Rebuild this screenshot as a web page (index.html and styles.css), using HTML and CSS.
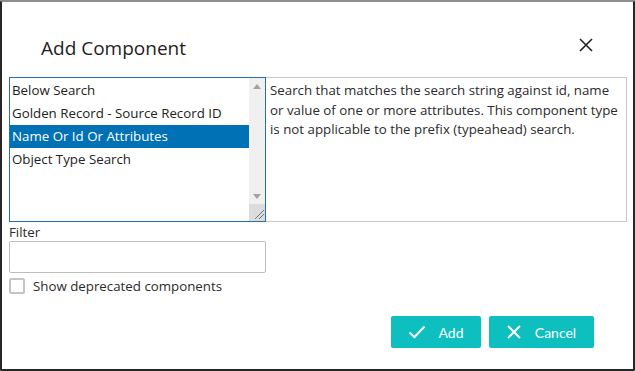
FILE: index.html
```html
<!DOCTYPE html>
<html lang="en">

<head>
    <meta charset="UTF-8" />
    <meta name="viewport" content="width=device-width, initial-scale=1.0" />
    <title>Add Component</title>
    <link rel="stylesheet" href="styles.css">
</head>

<body>
    <div class="dialog">
        <div class="header">
            <h1 class="title">Add Component</h1>
            <button class="closeBtn" aria-label="Close">
                <svg width="14" height="14" viewBox="0 0 14 14">
                    <path d="M1 1 L13 13 M13 1 L1 13" stroke="#222" stroke-width="1.6" fill="none" />
                </svg>
            </button>
        </div>
        <div class="body">
            <div class="pickRow">
                <div class="listbox">
                    <ul class="items">
                        <li>Below Search</li>
                        <li>Golden Record - Source Record ID</li>
                        <li class="selected">Name Or Id Or Attributes</li>
                        <li>Object Type Search</li>
                    </ul>
                    <div class="scrollbar">
                        <span class="arrow up"></span>
                        <span class="track"></span>
                        <span class="arrow down"></span>
                        <span class="grip">
                            <svg width="17" height="17" viewBox="0 0 17 17">
                                <path d="M15 6 L6 15 M15 10 L10 15" stroke="#777" stroke-width="1" fill="none" />
                            </svg>
                        </span>
                    </div>
                </div>
                <div class="description">
                    Search that matches the search string against id, name or value of one or more attributes. This component type is not applicable to the prefix (typeahead) search.
                </div>
            </div>
            <label class="filterLabel" for="filter">Filter</label>
            <input class="filter" id="filter" type="text" />
            <label class="deprecated">
                <span class="checkbox"></span>
                Show deprecated components
            </label>
        </div>
        <div class="footer">
            <button class="actionBtn addBtn">
                <svg width="18" height="14" viewBox="0 0 18 14">
                    <path d="M1.5 7.5 L6.5 12 L16.5 1.5" stroke="#fff" stroke-width="2" fill="none" />
                </svg>
                Add
            </button>
            <button class="actionBtn cancelBtn">
                <svg width="14" height="14" viewBox="0 0 14 14">
                    <path d="M1 1 L13 13 M13 1 L1 13" stroke="#fff" stroke-width="2" fill="none" />
                </svg>
                Cancel
            </button>
        </div>
    </div>
</body>

</html>
```

FILE: styles.css
```css
:root {
    --text: #222;
    --muted-border: #c8c8c8;
    --select-blue: #0071b5;
    --focus-blue: #2270ad;
    --teal: #0dbfbf;
    --base-font: 'Open Sans', 'Noto Sans', sans-serif;
    --base-size: 13.3px;
}

html,
body {
    margin: 0;
    padding: 0;
    height: 100%;
    background: #9a9a9a;
    font-family: var(--base-font);
    color: var(--text);
}

.dialog {
    box-sizing: border-box;
    height: 371px;
    background: #fff;
    border: 2px solid #262626;
    border-top-color: #8d8d8d;
    border-radius: 3px 3px 2px 2px;
    display: flex;
    flex-direction: column;
}

.header {
    display: flex;
    justify-content: space-between;
    align-items: flex-start;
    padding: 32px 40px 0 39px;
    height: 43px;
}

.title {
    margin: 0;
    font-size: 19px;
    font-weight: normal;
    line-height: 28px;
    color: #1e1e1e;
}

.closeBtn {
    border: none;
    background: none;
    padding: 0;
    margin-top: 4px;
    cursor: pointer;
    line-height: 0;
}

.body {
    padding: 0 7px;
    display: flex;
    flex-direction: column;
    align-items: flex-start;
}

.pickRow {
    display: flex;
    height: 145px;
}

.listbox {
    box-sizing: border-box;
    width: 257px;
    border: 1px solid var(--focus-blue);
    display: flex;
}

.items {
    list-style: none;
    margin: 0;
    padding: 1px 0 0;
    flex: 1;
    font-size: var(--base-size);
}

.items li {
    height: 23px;
    line-height: 23px;
    padding-left: 2px;
}

.items li.selected {
    background: var(--select-blue);
    color: #fff;
}

.scrollbar {
    width: 16px;
    background: #f0f0f0;
    display: flex;
    flex-direction: column;
    align-items: center;
}

.arrow {
    width: 0;
    height: 0;
    border-left: 4px solid transparent;
    border-right: 4px solid transparent;
}

.arrow.up {
    margin-top: 6px;
    border-bottom: 5px solid #a3a3a3;
}

.arrow.down {
    margin-bottom: 5px;
    border-top: 5px solid #a3a3a3;
}

.track {
    flex: 1;
}

.grip {
    width: 16px;
    height: 17px;
    background: #dcdcdc;
    line-height: 0;
}

.description {
    box-sizing: border-box;
    width: 361px;
    border: 1px solid var(--muted-border);
    border-left: none;
    padding: 3px 4px;
    font-size: var(--base-size);
    line-height: 19.5px;
    color: #2b2b2b;
}

.filterLabel {
    margin-top: 1px;
    font-size: var(--base-size);
    line-height: 18px;
    color: #2b2b2b;
}

.filter {
    box-sizing: border-box;
    width: 257px;
    height: 32px;
    border: 1px solid #bdbdbd;
    border-radius: 2px;
    margin: 0;
}

.deprecated {
    display: flex;
    align-items: center;
    gap: 8px;
    margin-top: 4px;
    font-size: var(--base-size);
    color: #2b2b2b;
}

.checkbox {
    box-sizing: border-box;
    width: 16px;
    height: 16px;
    border: 2px solid #c4c4c4;
    border-radius: 2px;
}

.footer {
    display: flex;
    justify-content: flex-end;
    gap: 8px;
    padding: 21px 39px 0 0;
}

.actionBtn {
    height: 32px;
    border: none;
    border-radius: 2px;
    background: var(--teal);
    color: #fff;
    font-family: Lato, sans-serif;
    font-size: 14px;
    display: flex;
    align-items: center;
    justify-content: center;
    gap: 12px;
    cursor: pointer;
}

.addBtn {
    width: 90px;
}

.cancelBtn {
    width: 105px;
    gap: 14px;
}
```
